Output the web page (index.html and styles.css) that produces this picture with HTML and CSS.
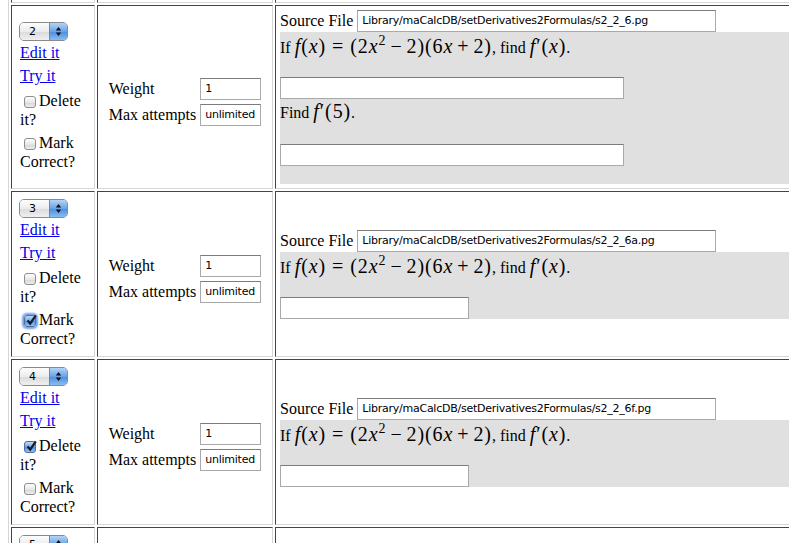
FILE: index.html
```html
<!DOCTYPE html>
<html lang="en">
<head>
<meta charset="UTF-8">
<title>Set Detail: Problems</title>
<link rel="stylesheet" href="styles.css">
</head>
<body>
  <table class="problems">
    <!-- bottom of the problem above, scrolled out of view -->
    <tr class="cut">
      <td class="ctl"><div class="stub"></div></td>
      <td class="wt"><div class="stub"></div></td>
      <td class="src"><div class="stub"></div></td>
    </tr>

    <tr>
      <td class="ctl">
        <div class="stack">
          <span class="stepper"><span class="num">2</span><span class="arrows"><svg width="7" height="11" viewBox="0 0 7 11"><polygon points="3.5,1 6.2,4.4 0.8,4.4"/><polygon points="0.8,6.6 6.2,6.6 3.5,10"/></svg></span></span>
          <a href="#" class="edit">Edit it</a>
          <a href="#" class="try">Try it</a>
          <label class="opt del"><span class="cb"></span>Delete it?</label>
          <label class="opt mark"><span class="cb"></span>Mark Correct?</label>
        </div>
      </td>
      <td class="wt">
        <div class="wt-grid">
          <span>Weight</span><input type="text" value="1">
          <span>Max attempts</span><input type="text" value="unlimited">
        </div>
      </td>
      <td class="src">
        <div class="srcline">Source File <input type="text" class="path" value="Library/maCalcDB/setDerivatives2Formulas/s2_2_6.pg"></div>
        <div class="pg">
          <div class="q">If <span class="m"><i>f</i>(<i>x</i>)<span class="rel">=</span>(2<i>x</i><sup>2</sup><span class="bin">−</span>2)(6<i>x</i><span class="bin">+</span>2)</span>, find <span class="m"><i>f</i>′(<i>x</i>)</span>.</div>
          <input type="text" class="ans">
          <div class="q second">Find <span class="m"><i>f</i>′(5)</span>.</div>
          <input type="text" class="ans">
          <div class="tail"></div>
        </div>
      </td>
    </tr>

    <tr>
      <td class="ctl">
        <div class="stack">
          <span class="stepper"><span class="num">3</span><span class="arrows"><svg width="7" height="11" viewBox="0 0 7 11"><polygon points="3.5,1 6.2,4.4 0.8,4.4"/><polygon points="0.8,6.6 6.2,6.6 3.5,10"/></svg></span></span>
          <a href="#" class="edit">Edit it</a>
          <a href="#" class="try">Try it</a>
          <label class="opt del"><span class="cb"></span>Delete it?</label>
          <label class="opt mark"><span class="cb on focus"><svg width="13" height="13" viewBox="0 0 13 13"><path d="M2.6 6.4 L5.2 9.6 L10.8 1.4"/></svg></span>Mark Correct?</label>
        </div>
      </td>
      <td class="wt">
        <div class="wt-grid">
          <span>Weight</span><input type="text" value="1">
          <span>Max attempts</span><input type="text" value="unlimited">
        </div>
      </td>
      <td class="src">
        <div class="srcline">Source File <input type="text" class="path" value="Library/maCalcDB/setDerivatives2Formulas/s2_2_6a.pg"></div>
        <div class="pg">
          <div class="q">If <span class="m"><i>f</i>(<i>x</i>)<span class="rel">=</span>(2<i>x</i><sup>2</sup><span class="bin">−</span>2)(6<i>x</i><span class="bin">+</span>2)</span>, find <span class="m"><i>f</i>′(<i>x</i>)</span>.</div>
          <input type="text" class="ans short">
        </div>
      </td>
    </tr>

    <tr>
      <td class="ctl">
        <div class="stack">
          <span class="stepper"><span class="num">4</span><span class="arrows"><svg width="7" height="11" viewBox="0 0 7 11"><polygon points="3.5,1 6.2,4.4 0.8,4.4"/><polygon points="0.8,6.6 6.2,6.6 3.5,10"/></svg></span></span>
          <a href="#" class="edit">Edit it</a>
          <a href="#" class="try">Try it</a>
          <label class="opt del"><span class="cb on"><svg width="13" height="13" viewBox="0 0 13 13"><path d="M2.6 6.4 L5.2 9.6 L10.8 1.4"/></svg></span>Delete it?</label>
          <label class="opt mark"><span class="cb"></span>Mark Correct?</label>
        </div>
      </td>
      <td class="wt">
        <div class="wt-grid">
          <span>Weight</span><input type="text" value="1">
          <span>Max attempts</span><input type="text" value="unlimited">
        </div>
      </td>
      <td class="src">
        <div class="srcline">Source File <input type="text" class="path" value="Library/maCalcDB/setDerivatives2Formulas/s2_2_6f.pg"></div>
        <div class="pg">
          <div class="q">If <span class="m"><i>f</i>(<i>x</i>)<span class="rel">=</span>(2<i>x</i><sup>2</sup><span class="bin">−</span>2)(6<i>x</i><span class="bin">+</span>2)</span>, find <span class="m"><i>f</i>′(<i>x</i>)</span>.</div>
          <input type="text" class="ans short">
        </div>
      </td>
    </tr>

    <tr>
      <td class="ctl">
        <div class="stack">
          <span class="stepper"><span class="num">5</span><span class="arrows"><svg width="7" height="11" viewBox="0 0 7 11"><polygon points="3.5,1 6.2,4.4 0.8,4.4"/><polygon points="0.8,6.6 6.2,6.6 3.5,10"/></svg></span></span>
          <a href="#" class="edit">Edit it</a>
          <a href="#" class="try">Try it</a>
          <label class="opt del"><span class="cb"></span>Delete it?</label>
          <label class="opt mark"><span class="cb"></span>Mark Correct?</label>
        </div>
      </td>
      <td class="wt">
        <div class="wt-grid">
          <span>Weight</span><input type="text" value="1">
          <span>Max attempts</span><input type="text" value="unlimited">
        </div>
      </td>
      <td class="src">
        <div class="srcline">Source File <input type="text" class="path" value="Library/maCalcDB/setDerivatives2Formulas/s2_2_7.pg"></div>
        <div class="pg">
          <div class="q">Find <span class="m"><i>f</i>′(<i>x</i>)</span>.</div>
          <input type="text" class="ans short">
        </div>
      </td>
    </tr>
  </table>
</body>
</html>
```

FILE: styles.css
```css
html, body {
  overflow: hidden;
}

body {
  margin: 0 0 0 8px;
  background: #fff;
  color: #000;
  font-family: "Liberation Serif", "Times New Roman", serif;
  font-size: 16px;
}

/* the problem table, old-school border=1 look */
.problems {
  table-layout: fixed;
  width: 870px;
  margin-top: -22px;
  border-collapse: separate;
  border-spacing: 2px;
  border: 1px solid;
  border-color: #d6d6d6 #444 #444 #d6d6d6;
}

.problems td {
  box-sizing: border-box;
  padding: 0;
  vertical-align: middle;
  border: 1px solid;
  border-color: #444 #d6d6d6 #d6d6d6 #444;
}

td.ctl {
  width: 84px;
  padding: 7px 8px 8px 8px;
}

td.wt {
  width: 176px;
  padding-top: 10px;
}

td.src {
  width: 600px;
  padding: 4px;
}

.problems .cut td {
  padding: 0;
}

.stub {
  height: 20px;
}

/* left column: number, links, checkboxes */
.stack {
  display: flex;
  flex-direction: column;
  align-items: flex-start;
  line-height: 19px;
}

.stack a {
  color: #0000ee;
}

.edit { margin-top: 2px; }
.try { margin-top: 4px; }
.opt.del { margin-top: 6px; }
.opt.mark { margin-top: 4px; }

.stepper {
  display: flex;
  box-sizing: border-box;
  width: 49px;
  height: 19px;
  margin-left: -1px;
  border: 1px solid #8a8a8a;
  border-radius: 5px;
  overflow: hidden;
  font: 11px "DejaVu Sans", sans-serif;
}

.stepper .num {
  flex: 1;
  padding-left: 9px;
  line-height: 17px;
  background: linear-gradient(#fdfdfd, #ebebeb 50%, #d9d9d9 51%, #f0f0f0);
}

.stepper .arrows {
  width: 17px;
  display: flex;
  align-items: center;
  justify-content: center;
  border-left: 1px solid #6a86b3;
  background: linear-gradient(#b3d3f7, #68a3e8 50%, #4a8ce0 51%, #86bdf3);
}

.stepper svg {
  fill: #111;
}

.cb {
  position: relative;
  display: inline-block;
  box-sizing: border-box;
  width: 12px;
  height: 12px;
  margin: 0 3px 0 4px;
  vertical-align: -2px;
  border: 1px solid #8e8e8e;
  border-radius: 3px;
  background: linear-gradient(#fff, #e6e6e6 55%, #d4d4d4 56%, #eeeeee);
}

.cb.on {
  border-color: #4f6e9f;
  background: linear-gradient(#c0daf7, #6fa8ea 50%, #4c90e1 51%, #92c4f5);
}

.cb.focus {
  box-shadow: 0 0 2px 2px #6fa0e6;
}

.cb svg {
  position: absolute;
  left: 0;
  top: -2px;
  fill: none;
  stroke: #141a2a;
  stroke-width: 2.2;
}

/* middle column */
.wt-grid {
  display: grid;
  grid-template-columns: auto 61px;
  gap: 4px;
  align-items: center;
  justify-content: center;
}

input[type="text"] {
  box-sizing: border-box;
  height: 22px;
  margin: 0;
  padding: 0 4px 1px;
  border: 1px solid #a9a9a9;
  border-top-color: #7c7c7c;
  background: #fff;
  color: #000;
  font: 11px/19px "DejaVu Sans", sans-serif;
  letter-spacing: -0.25px;
}

.wt-grid input {
  width: 61px;
}

/* right column: source path and rendered problem */
.srcline {
  display: flex;
  align-items: center;
  gap: 4px;
  height: 22px;
}

.srcline .path {
  width: 359px;
}

.pg {
  background: #e0e0e0;
}

.q {
  line-height: 23px;
  padding-top: 3px;
  margin-bottom: 18px;
}

.q.second {
  padding-top: 1px;
  margin-bottom: 20px;
}

.m {
  font-size: 20px;
  letter-spacing: 0.9px;
}

.m sup {
  font-size: 14px;
  line-height: 0;
}

.m .rel {
  margin: 0 6px;
}

.m .bin {
  margin: 0 4px;
}

.ans {
  display: block;
  width: 344px;
}

.ans.short {
  width: 189px;
}

.tail {
  height: 18px;
}
```
